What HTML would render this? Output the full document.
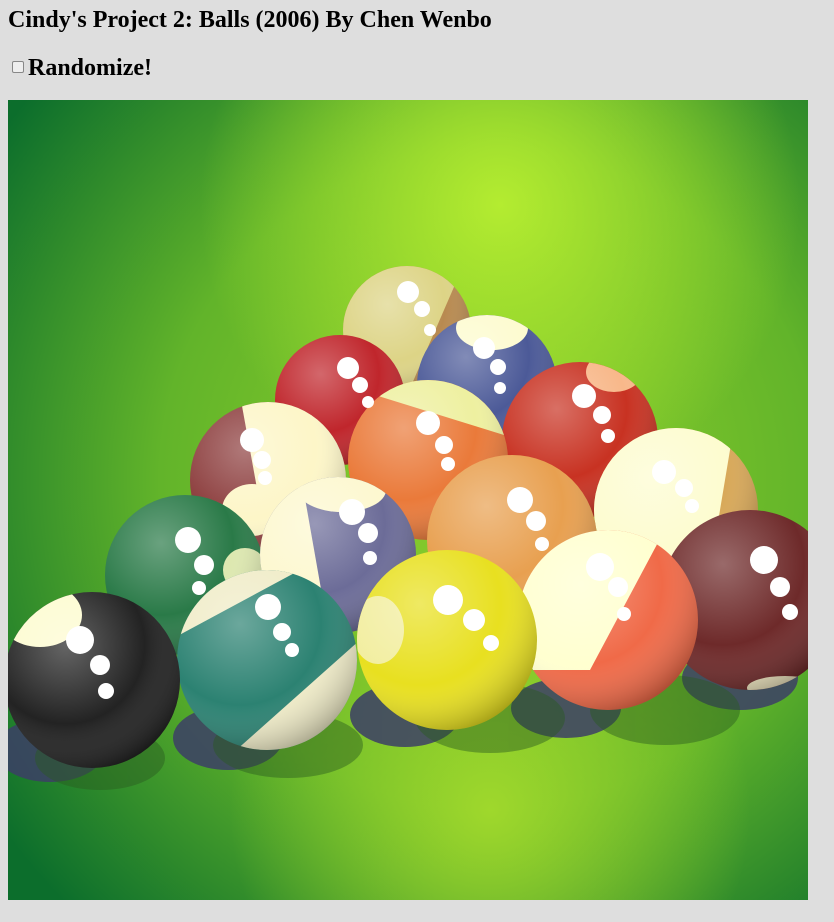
<!DOCTYPE html>
<html><head><style>
body{margin:0;background:#dedede;font-family:"Liberation Serif",serif;width:834px;height:922px;overflow:hidden;position:relative}
h3{position:absolute;left:8px;top:7px;margin:0;font-size:24px;font-weight:bold;color:#000;white-space:nowrap}
.r{position:absolute;left:8px;top:55px;font-size:24px;font-weight:bold;white-space:nowrap}
.r span.cb{display:inline-block;width:10px;height:10px;border:1px solid #888;background:#eee;border-radius:2px;margin:0 4px 0 4px;vertical-align:2px}
svg{position:absolute;left:8px;top:100px}
</style></head><body>
<h3>Cindy's Project 2: Balls (2006) By Chen Wenbo</h3>
<div class="r"><span class="cb"></span>Randomize!</div>
<svg width="800" height="800" viewBox="8 100 800 800">
<defs>
<radialGradient id="bg" cx="490" cy="480" r="600" gradientUnits="userSpaceOnUse">
<stop offset="0" stop-color="#8fd02c"/><stop offset="0.55" stop-color="#62b42a"/><stop offset="1" stop-color="#0c6e2c"/></radialGradient>
<radialGradient id="hl" cx="500" cy="205" r="300" gradientUnits="userSpaceOnUse">
<stop offset="0" stop-color="#b4ec30" stop-opacity="1"/><stop offset="1" stop-color="#b4ec30" stop-opacity="0"/></radialGradient>
<radialGradient id="hl2" cx="490" cy="810" r="260" gradientUnits="userSpaceOnUse">
<stop offset="0" stop-color="#a6dc2c" stop-opacity="0.9"/><stop offset="1" stop-color="#a6dc2c" stop-opacity="0"/></radialGradient>
<radialGradient id="sh" cx="0.35" cy="0.3" r="0.75"><stop offset="0" stop-color="#fff" stop-opacity="0.3"/><stop offset="0.6" stop-color="#fff" stop-opacity="0"/><stop offset="1" stop-color="#000" stop-opacity="0.28"/></radialGradient>
<clipPath id="c1"><circle cx="407" cy="330" r="64"/></clipPath>
<clipPath id="c3"><circle cx="487" cy="385" r="70"/></clipPath>
<clipPath id="c4"><circle cx="580" cy="440" r="78"/></clipPath>
<clipPath id="c5"><circle cx="268" cy="480" r="78"/></clipPath>
<clipPath id="c6"><circle cx="428" cy="460" r="80"/></clipPath>
<clipPath id="c7"><circle cx="676" cy="510" r="82"/></clipPath>
<clipPath id="c9"><circle cx="185" cy="575" r="80"/></clipPath>
<clipPath id="c10"><circle cx="338" cy="555" r="78"/></clipPath>
<clipPath id="c11"><circle cx="750" cy="600" r="90"/></clipPath>
<clipPath id="c12"><circle cx="608" cy="620" r="90"/></clipPath>
<clipPath id="c13"><circle cx="447" cy="640" r="90"/></clipPath>
<clipPath id="c14"><circle cx="267" cy="660" r="90"/></clipPath>
<clipPath id="c15"><circle cx="92" cy="680" r="88"/></clipPath>
</defs>
<rect x="8" y="100" width="800" height="800" fill="url(#bg)"/>
<rect x="8" y="100" width="800" height="800" fill="url(#hl)"/>
<rect x="8" y="100" width="800" height="800" fill="url(#hl2)"/>
<g fill="#3c3e66" opacity="0.85">
<ellipse cx="50" cy="750" rx="55" ry="32"/><ellipse cx="228" cy="738" rx="55" ry="32"/><ellipse cx="405" cy="715" rx="55" ry="32"/><ellipse cx="566" cy="708" rx="55" ry="30"/><ellipse cx="740" cy="678" rx="58" ry="32"/>
</g>
<g fill="#2a5a20" opacity="0.45">
<ellipse cx="100" cy="758" rx="65" ry="32"/><ellipse cx="288" cy="745" rx="75" ry="33"/><ellipse cx="490" cy="718" rx="75" ry="35"/><ellipse cx="665" cy="710" rx="75" ry="35"/>
</g>

<circle cx="407" cy="330" r="64" fill="#b88a50"/><g clip-path="url(#c1)"><path d="M330 250 L470 250 L405 400 L330 400Z" fill="#ddd486"/></g><circle cx="407" cy="330" r="64" fill="url(#sh)"/>
<circle cx="340" cy="400" r="65" fill="#c0262c"/><circle cx="340" cy="400" r="65" fill="url(#sh)"/>
<circle cx="487" cy="385" r="70" fill="#4c5a98"/><g clip-path="url(#c3)"><ellipse cx="492" cy="328" rx="36" ry="22" fill="#fdfbd0"/></g><circle cx="487" cy="385" r="70" fill="url(#sh)"/>
<circle cx="580" cy="440" r="78" fill="#c83222"/><g clip-path="url(#c4)"><ellipse cx="614" cy="372" rx="28" ry="20" fill="#f8b88a"/></g><circle cx="580" cy="440" r="78" fill="url(#sh)"/>
<circle cx="268" cy="480" r="78" fill="#8e4040"/><g clip-path="url(#c5)"><path d="M240 395 L360 395 L360 560 L270 560Z" fill="#fdf6c8"/><ellipse cx="252" cy="510" rx="30" ry="26" fill="#fdf6c8"/></g><circle cx="268" cy="480" r="78" fill="url(#sh)"/>
<circle cx="428" cy="460" r="80" fill="#ea7a3a"/><g clip-path="url(#c6)"><path d="M380 370 L520 370 L520 440 L375 395Z" fill="#eef0a0"/></g><circle cx="428" cy="460" r="80" fill="url(#sh)"/>
<circle cx="676" cy="510" r="82" fill="#d8a858"/><g clip-path="url(#c7)"><path d="M590 420 L735 420 L705 600 L590 600Z" fill="#fdfcd0"/></g><circle cx="676" cy="510" r="82" fill="url(#sh)"/>
<circle cx="512" cy="540" r="85" fill="#e8a050"/><circle cx="512" cy="540" r="85" fill="url(#sh)"/>
<circle cx="185" cy="575" r="80" fill="#2a7a48"/><g clip-path="url(#c9)"><circle cx="245" cy="570" r="22" fill="#dde8b0"/></g><circle cx="185" cy="575" r="80" fill="url(#sh)"/>
<circle cx="338" cy="555" r="78" fill="#6c6c98"/><g clip-path="url(#c10)"><path d="M255 470 L300 470 L330 640 L255 640Z" fill="#fdf8d0"/><ellipse cx="342" cy="490" rx="44" ry="22" fill="#fdf8d0"/></g><circle cx="338" cy="555" r="78" fill="url(#sh)"/>
<circle cx="750" cy="600" r="90" fill="#6e2a2a"/><g clip-path="url(#c11)"><ellipse cx="785" cy="688" rx="38" ry="12" fill="#efe6c0"/></g><circle cx="750" cy="600" r="90" fill="url(#sh)"/>
<circle cx="608" cy="620" r="90" fill="#f06a48"/><g clip-path="url(#c12)"><path d="M510 520 L670 520 L590 670 L510 670Z" fill="#ffffd0"/></g><circle cx="608" cy="620" r="90" fill="url(#sh)"/>
<circle cx="447" cy="640" r="90" fill="#e8e020"/><g clip-path="url(#c13)"><ellipse cx="378" cy="630" rx="26" ry="34" fill="#f2eea0"/></g><circle cx="447" cy="640" r="90" fill="url(#sh)"/>
<circle cx="267" cy="660" r="90" fill="#2c8272"/><g clip-path="url(#c14)"><path d="M225 760 L360 640 L370 760Z" fill="#f0ecc8"/><path d="M170 640 L300 570 L170 570Z" fill="#f0ecc8"/></g><circle cx="267" cy="660" r="90" fill="url(#sh)"/>
<circle cx="92" cy="680" r="88" fill="#232323"/><g clip-path="url(#c15)"><ellipse cx="40" cy="615" rx="42" ry="32" fill="#fdfbd0"/></g><circle cx="92" cy="680" r="88" fill="url(#sh)"/>

<g fill="#fff">
<circle cx="408" cy="292" r="11"/><circle cx="422" cy="309" r="8"/><circle cx="430" cy="330" r="6"/>
<circle cx="348" cy="368" r="11"/><circle cx="360" cy="385" r="8"/><circle cx="368" cy="402" r="6"/>
<circle cx="484" cy="348" r="11"/><circle cx="498" cy="367" r="8"/><circle cx="500" cy="388" r="6"/>
<circle cx="584" cy="396" r="12"/><circle cx="602" cy="415" r="9"/><circle cx="608" cy="436" r="7"/>
<circle cx="252" cy="440" r="12"/><circle cx="262" cy="460" r="9"/><circle cx="265" cy="478" r="7"/>
<circle cx="428" cy="423" r="12"/><circle cx="444" cy="445" r="9"/><circle cx="448" cy="464" r="7"/>
<circle cx="664" cy="472" r="12"/><circle cx="684" cy="488" r="9"/><circle cx="692" cy="506" r="7"/>
<circle cx="520" cy="500" r="13"/><circle cx="536" cy="521" r="10"/><circle cx="542" cy="544" r="7"/>
<circle cx="188" cy="540" r="13"/><circle cx="204" cy="565" r="10"/><circle cx="199" cy="588" r="7"/>
<circle cx="352" cy="512" r="13"/><circle cx="368" cy="533" r="10"/><circle cx="370" cy="558" r="7"/>
<circle cx="764" cy="560" r="14"/><circle cx="780" cy="587" r="10"/><circle cx="790" cy="612" r="8"/>
<circle cx="600" cy="567" r="14"/><circle cx="618" cy="587" r="10"/><circle cx="624" cy="614" r="7"/>
<circle cx="448" cy="600" r="15"/><circle cx="474" cy="620" r="11"/><circle cx="491" cy="643" r="8"/>
<circle cx="268" cy="607" r="13"/><circle cx="282" cy="632" r="9"/><circle cx="292" cy="650" r="7"/>
<circle cx="80" cy="640" r="14"/><circle cx="100" cy="665" r="10"/><circle cx="106" cy="691" r="8"/>
</g>
</svg>
</body></html>
